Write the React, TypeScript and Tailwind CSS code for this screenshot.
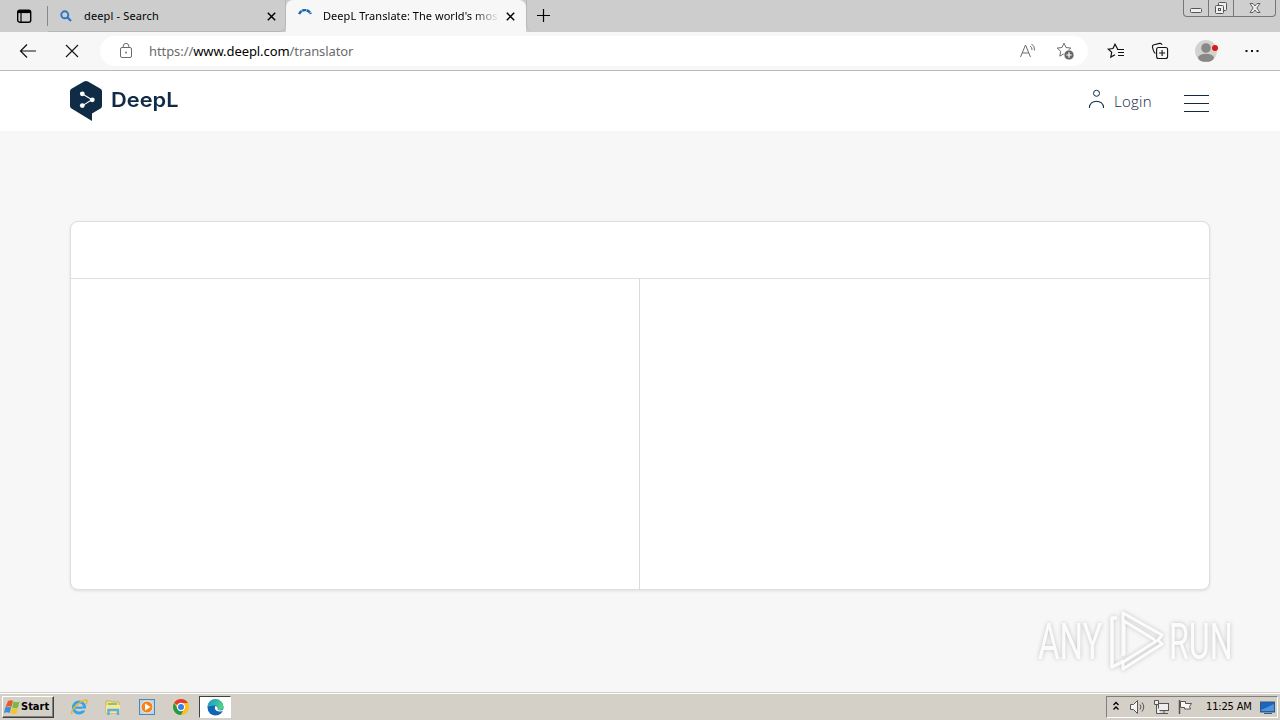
import type { ReactNode } from "react";

type IconProps = {
  size?: number;
  w?: number;
  className?: string;
  children: ReactNode;
};

const Icon = ({ size = 16, w, className = "", children }: IconProps) => (
  <svg
    width={w ?? size}
    height={size}
    viewBox={`0 0 ${w ?? size} ${size}`}
    fill="none"
    stroke="currentColor"
    className={`shrink-0 ${className}`}
  >
    {children}
  </svg>
);

const CloseIcon = () => (
  <Icon size={9} className="text-black">
    <path d="M.8.8l7.4 7.4M8.2.8L.8 8.2" strokeWidth="1.5" />
  </Icon>
);

const WindowButtons = () => (
  <div className="mr-[4px] ml-auto flex h-[17px] w-[93px] rounded-b-[4px] border border-t-0 border-[#777] bg-[#cfcfcf] text-[#555]">
    <div className="flex w-[25px] justify-center border-r border-[#777]">
      <Icon size={16} w={14}>
        <rect x="1.5" y="8.5" width="11" height="4" rx="1" fill="#eee" />
      </Icon>
    </div>
    <div className="flex w-[25px] justify-center border-r border-[#777]">
      <Icon size={16} w={14}>
        <rect x="4.5" y="2.5" width="8" height="8" rx="1" fill="#eee" />
        <rect x="1.5" y="5.5" width="8" height="8" rx="1" fill="#eee" />
        <rect x="4.5" y="8.5" width="2" height="2" />
      </Icon>
    </div>
    <div className="flex flex-1 justify-center">
      <Icon size={16} w={14}>
        <path
          d="M2 3.5h3l2 2.5 2-2.5h3L8.8 8l3.2 4.5H9L7 10l-2 2.5H2L5.2 8z"
          fill="#eee"
          strokeWidth=".9"
        />
      </Icon>
    </div>
  </div>
);

const TabStrip = () => (
  <div className="flex h-8 shrink-0 bg-[#cdcdcd] font-['Noto_Sans','Open_Sans',sans-serif] text-[11px] text-black">
    <div className="flex w-[47px] justify-center pt-2">
      <Icon size={16} className="text-black">
        <rect x="1.7" y="2.2" width="13" height="12" rx="2" strokeWidth="1.4" />
        <path d="M5 5v9" strokeWidth="1.2" />
        <path d="M2 3.7h12.5" strokeWidth="2.8" />
      </Icon>
    </div>
    <div className="mt-[6px] h-5 w-px bg-[#888]" />
    <div className="flex w-[238px] items-center rounded-br-[6px] border-r border-b border-[#b7b7b7] pt-px pr-[9px] pl-[12px]">
      <Icon size={12} className="text-[#2d76c3]">
        <circle cx="4.8" cy="4.8" r="3.5" strokeWidth="1.9" />
        <path d="M7.3 7.3l3.7 3.7" strokeWidth="2.2" />
      </Icon>
      <span className="ml-[12px] flex-1 whitespace-nowrap tracking-[0.15px]">deepl - Search</span>
      <CloseIcon />
    </div>
    <div className="flex w-[240px] items-center rounded-t-[7px] bg-[#f7f7f7] pr-[11px] pl-[12px]">
      <Icon size={14} className="text-[#1868b5]">
        <path d="M1.2 5.2A6.2 6.2 0 0 1 12.8 5" strokeWidth="2.4" strokeDasharray="4 .5" />
      </Icon>
      <span className="ml-[11px] w-[176px] whitespace-nowrap tracking-[0.05px] [mask-image:linear-gradient(to_right,#000_85%,transparent)]">
        DeepL Translate: The world's mos
      </span>
      <span className="ml-auto">
        <CloseIcon />
      </span>
    </div>
    <div className="flex h-[31px] w-[35px] items-center justify-center rounded-bl-[6px] border-l border-[#b7b7b7] pr-[2px]">
      <Icon size={15} className="text-black">
        <path d="M7.5 1v13M1 7.5h13" strokeWidth="1.2" />
      </Icon>
    </div>
    <WindowButtons />
  </div>
);

const star = "M8 1.2l2 4.3 4.8.6-3.5 3.2.9 4.8L8 11.8l-4.2 2.3.9-4.8L1.2 6.1 6 5.5z";

const Toolbar = () => (
  <div className="flex h-[39px] shrink-0 items-center border-b border-[#b9b9b9] bg-[#f7f7f7] text-[#111]">
    <Icon size={16} w={18} className="ml-[19px]">
      <path d="M17 8H1.5M8 1.5L1.5 8 8 14.5" strokeWidth="1.2" />
    </Icon>
    <Icon size={14} className="ml-[28px]">
      <path d="M1 1l12 12M13 1L1 13" strokeWidth="1.1" />
    </Icon>
    <div className="ml-[21px] flex h-[30px] w-[988px] items-center rounded-full bg-white text-[#6b6b6b]">
      <Icon size={16} w={14} className="ml-[19px]">
        <rect x="1.5" y="4.5" width="11" height="10" rx="1.5" />
        <path d="M4.2 4.5V3.2a2.8 2.8 0 0 1 5.6 0v1.3" />
        <circle cx="7" cy="9.5" r=".9" fill="currentColor" stroke="none" />
      </Icon>
      <div className="ml-[16px] flex-1 pt-px font-['Noto_Sans','Open_Sans',sans-serif] text-[13px] tracking-[-0.08px] whitespace-nowrap">
        https://<span className="text-black">www.deepl.com</span>/translator
      </div>
      <Icon size={16} w={18} className="mr-[19px]">
        <path d="M1.5 14L6.5 2l5 12M3.3 10h6.4M11 3a4 4 0 0 1 2 4M12.5 1a6.5 6.5 0 0 1 3 6.5" />
      </Icon>
      <Icon size={18} className="mr-[14px]">
        <path d={star} />
        <circle cx="13" cy="13" r="5" fill="#666" stroke="#fff" strokeWidth=".7" />
        <path d="M13 10.3v5.4M10.3 13h5.4" stroke="#fff" strokeWidth="1.2" />
      </Icon>
    </div>
    <Icon size={16} w={18} className="ml-[19px]">
      <path d="M11 5.5l-.8-.2L8 1.2 6 5.5l-4.8.6 3.5 3.2-.9 4.8L8 11.8" strokeWidth="1.2" />
      <path d="M10 6.5h7M11 9.5h6M11 12.5h6" strokeWidth="1.1" />
    </Icon>
    <Icon size={18} className="ml-[26px]">
      <path
        d="M4.5 11.5C2.7 10.7 2 7.3 1.5 5.2c-.3-1.3.3-2.1 1.5-2.4l5.7-1.4c1.2-.3 1.9.3 2.4 1.4"
        strokeWidth="1.1"
      />
      <rect x="5.6" y="5.5" width="11" height="11" rx="2" strokeWidth="1.1" />
      <path d="M11.1 8v6M8.1 11h6" strokeWidth="1.1" />
    </Icon>
    <Icon size={24} w={26} className="ml-[25px]">
      <circle cx="12" cy="12" r="11" fill="#d2d2cf" stroke="none" />
      <circle cx="12" cy="9" r="4.8" fill="#8a8886" stroke="none" />
      <ellipse cx="12" cy="18.8" rx="8" ry="4" fill="#8a8886" stroke="none" />
      <circle cx="21" cy="9" r="3" fill="#df1717" stroke="none" />
    </Icon>
    <Icon size={4} w={16} className="ml-[24px]">
      <path d="M1.5 2h2M7 2h2M12.5 2h2" strokeWidth="2" />
    </Icon>
  </div>
);

const SiteHeader = () => (
  <header className="flex h-[60px] shrink-0 justify-between bg-white pr-[71px] pl-[70px] text-[#0f2b46]">
    <div className="flex pt-[9px]">
      <Icon size={41} w={33}>
        <path
          d="M14 1.6q2-1.1 4 0L30.5 8.8Q32 9.7 32 11.4v14.5q0 1.8-1.5 2.7L22 33.5V41L1.5 28.6Q0 27.7 0 25.9V11.4Q0 9.7 1.5 8.8z"
          fill="#0f2b46"
          stroke="none"
        />
        <g stroke="#fff" strokeWidth="1.1">
          <path d="M12.5 14L22 19.8l-9.5 5.8" />
          <g fill="#fff" stroke="none">
            <circle cx="12.3" cy="13.8" r="2.4" />
            <circle cx="22.3" cy="19.8" r="2.4" />
            <circle cx="12.3" cy="25.6" r="2.4" />
          </g>
        </g>
      </Icon>
      <span className="mt-[6px] ml-[8px] origin-left scale-x-[1.09] font-['Inter',sans-serif] text-[20px] leading-[28px] font-semibold">
        DeepL
      </span>
    </div>
    <div className="flex pt-[18px]">
      <Icon size={20} w={16} className="translate-x-[0.5px]">
        <circle cx="8" cy="4.3" r="3" />
        <path d="M.8 19c0-9 14.4-9 14.4 0" strokeWidth="1.1" />
      </Icon>
      <span className="ml-[10px] h-6 w-[38px] font-['Open_Sans','Noto_Sans',sans-serif] text-[15px] leading-[25px] font-light tracking-[0.25px] whitespace-nowrap">
        Login
      </span>
      <div className="mt-[6px] ml-[32px] flex h-[17px] w-[25px] flex-col justify-between">
        <div className="h-px bg-[#0f2b46]" />
        <div className="h-px bg-[#0f2b46]" />
        <div className="h-px bg-[#0f2b46]" />
      </div>
    </div>
  </header>
);

const Watermark = () => (
  <div className="absolute top-[610px] left-[1038px] flex h-[62px] w-[196px] items-center font-['Roboto',sans-serif] text-[50px] leading-[62px] text-white/90 drop-shadow-[0_0_2px_#bbb]">
    <span className="w-[67px] pt-[2px]">
      <span className="inline-block origin-left scale-x-[0.66]">ANY</span>
    </span>
    <Icon size={62} w={62}>
      <path d="M12 8H7v49l12-6" strokeWidth="3.5" strokeLinejoin="round" />
      <path
        d="M50 30L19 11v34M18 46V3l39 22-4 5M18 52l35-22 4 4-39 25v-6"
        strokeWidth="3"
        strokeLinejoin="round"
      />
    </Icon>
    <span className="w-[65px] pt-[2px] pl-[2px]">
      <span className="inline-block origin-left scale-x-[0.645]">RUN</span>
    </span>
  </div>
);

const InternetExplorer = () => (
  <Icon size={18}>
    <circle cx="9" cy="9.5" r="5.6" stroke="#35a4e6" strokeWidth="3" />
    <path d="M5 9.7h9.7" stroke="#35a4e6" strokeWidth="2.2" />
    <path d="M12 11.5h5" stroke="#d4d0c8" strokeWidth="2" />
    <path d="M2 16C-1 13 11 2 16 2c2 0 1 2.5 0 4" stroke="#e8b530" strokeWidth="1.4" />
  </Icon>
);

const Explorer = () => (
  <Icon size={18}>
    <path d="M2 3h5l1 1h7v11H2z" fill="#f7df83" stroke="#cfa63c" strokeWidth=".8" />
    <path d="M4 5h9v3H4z" fill="#83c873" stroke="none" />
    <path d="M2 7h14v8H2z" fill="#f9e799" stroke="none" />
    <path d="M4.5 17v-5H14v5" stroke="#5fb1d7" strokeWidth="2.5" />
  </Icon>
);

const MediaPlayer = () => (
  <Icon size={18}>
    <rect x="1.5" y="1.5" width="15" height="15" fill="#b5d6ef" stroke="#4b86bd" />
    <circle cx="9" cy="9" r="6" fill="#f58519" stroke="#fff" strokeWidth=".7" />
    <path d="M7 5.5L12.5 9 7 12.5z" fill="#fff" stroke="none" />
  </Icon>
);

const Chrome = () => (
  <Icon size={18}>
    <circle cx="9" cy="9" r="8" fill="#fbc116" stroke="none" />
    <path d="M9 9L2.1 5A8 8 0 0 1 15.9 5H9z" fill="#e33b2e" stroke="none" />
    <path d="M9 17A8 8 0 0 1 2.1 5L6 11l5 2z" fill="#229a4b" stroke="none" />
    <circle cx="9" cy="9" r="3.6" fill="#3b7de9" stroke="#fff" strokeWidth="1.2" />
  </Icon>
);

const Edge = () => (
  <Icon size={17}>
    <defs>
      <linearGradient id="edge" x1="0" y1="0" x2="1" y2=".5">
        <stop stopColor="#1596d6" />
        <stop offset="1" stopColor="#52d184" />
      </linearGradient>
    </defs>
    <circle cx="8.5" cy="8.5" r="8" fill="#1264b4" stroke="none" />
    <path
      d="M.5 8A8 8 0 0 1 16.5 8c0 3-4 4-6 2.5 1-2 0-4-2.5-4-3 0-5 .5-7.5 1.5z"
      fill="url(#edge)"
      stroke="none"
    />
    <path
      d="M8.5 7c-1.8 2 0 5.500 4 5.500 1.500 0 3.200-.5 4.500-1v-1.500c-1.500 1.500-4.500 2-6.500.500.7-1.500.2-3-2-3.500z"
      fill="#fff"
      stroke="none"
    />
  </Icon>
);

const Tray = () => (
  <div className="mr-[2px] ml-auto flex h-[22px] w-[172px] items-center border border-t-[#808080] border-r-white border-b-white border-l-[#808080] text-[#555]">
    <Icon size={10} w={8} className="mb-[2px] ml-[5px] text-black">
      <path d="M1.5 4L4 1.5 6.5 4M1.5 8.5L4 6l2.5 2.5" strokeWidth="1.3" />
    </Icon>
    <Icon size={16} w={18} className="ml-[9px]">
      <path d="M1.5 5.5h3l4-4v13l-4-4h-3z" fill="#f5f5f5" />
      <path d="M11 5.500q2 2.500 0 5M13 3.500q3.500 4.500 0 9" />
    </Icon>
    <Icon size={16} w={17} className="ml-[6px]">
      <rect x="5.5" y="4.5" width="10" height="7" fill="#eee" />
      <path d="M8 14.5h7M11 11.5v3" />
      <path d="M1.5 1.5h4v4h-4zM3.500 5.500v9H8" fill="#eee" />
    </Icon>
    <Icon size={16} className="ml-[7px]">
      <path d="M2.5 1v14" strokeWidth="1.5" />
      <path d="M3.5 2.5h5v2h6l-2 3 1 2.500h-6V8.500h-4z" fill="#f7f7f7" />
    </Icon>
    <span className="ml-[13px] w-[48px] font-['DejaVu_Sans_Condensed','DejaVu_Sans',sans-serif] text-[11px] tracking-[-0.15px] whitespace-nowrap text-black">
      11:25 AM
    </span>
    <Icon size={15} w={17} className="ml-[5px]">
      <rect x="1.5" y="2" width="14" height="10" fill="#1b65bc" stroke="#315781" />
      <path d="M2 10L15 4v7H2z" fill="#4d94d8" stroke="none" />
      <path d="M5 13.5h8" stroke="#3a5b8a" />
    </Icon>
  </div>
);

const Taskbar = () => (
  <div className="flex h-[28px] shrink-0 items-center border-t border-[#d4d0c8] bg-[#d4d0c8] pt-px shadow-[inset_0_1px_0_#fff]">
    <div className="ml-[2px] flex h-[22px] w-[52px] items-center border border-t-white border-r-[#404040] border-b-[#404040] border-l-white shadow-[inset_-1px_-1px_0_#808080]">
      <Icon size={17} w={16} className="ml-px">
        <g stroke="none">
          <path d="M4 2q3-1.5 5 0L7.500 8Q5 6.500 1.500 8z" fill="#e9582b" />
          <path d="M9.500 2.500q3 1.500 6 0L14 8.500Q11 10 8.200 8.500z" fill="#76b943" />
          <path d="M1.200 8.500Q4 7 7.200 8.500L5.700 14Q3 12.500 0 14z" fill="#3d8fd1" />
          <path d="M7.900 9q3 1.500 5.900 0L12.500 14.500q-3 1.500-6 0z" fill="#f7c32c" />
        </g>
      </Icon>
      <span className="mt-px ml-px font-['DejaVu_Sans_Condensed','DejaVu_Sans',sans-serif] text-[11px] font-bold text-black">
        Start
      </span>
    </div>
    <div className="ml-[16px] flex items-center gap-[16px]">
      <InternetExplorer />
      <Explorer />
      <MediaPlayer />
      <Chrome />
    </div>
    <div className="ml-[9px] flex h-[22px] w-[32px] items-center justify-center border border-t-[#404040] border-r-white border-b-white border-l-[#404040] bg-white">
      <Edge />
    </div>
    <Tray />
  </div>
);

export default function App() {
  return (
    <div className="relative flex h-[720px] w-[1280px] flex-col overflow-hidden bg-[#f7f7f7]">
      <TabStrip />
      <Toolbar />
      <SiteHeader />
      <main className="flex-1 px-[70px] pt-[90px]">
        <div className="flex h-[369px] flex-col overflow-hidden rounded-[8px] border border-[#dedede] bg-white shadow-[0_1px_3px_rgba(0,0,0,0.1)]">
          <div className="h-[57px] shrink-0 border-b border-[#dfdfdf]" />
          <div className="flex flex-1">
            <div className="w-[569px] border-r border-[#dadada]" />
            <div className="flex-1" />
          </div>
        </div>
      </main>
      <Taskbar />
      <Watermark />
    </div>
  );
}
